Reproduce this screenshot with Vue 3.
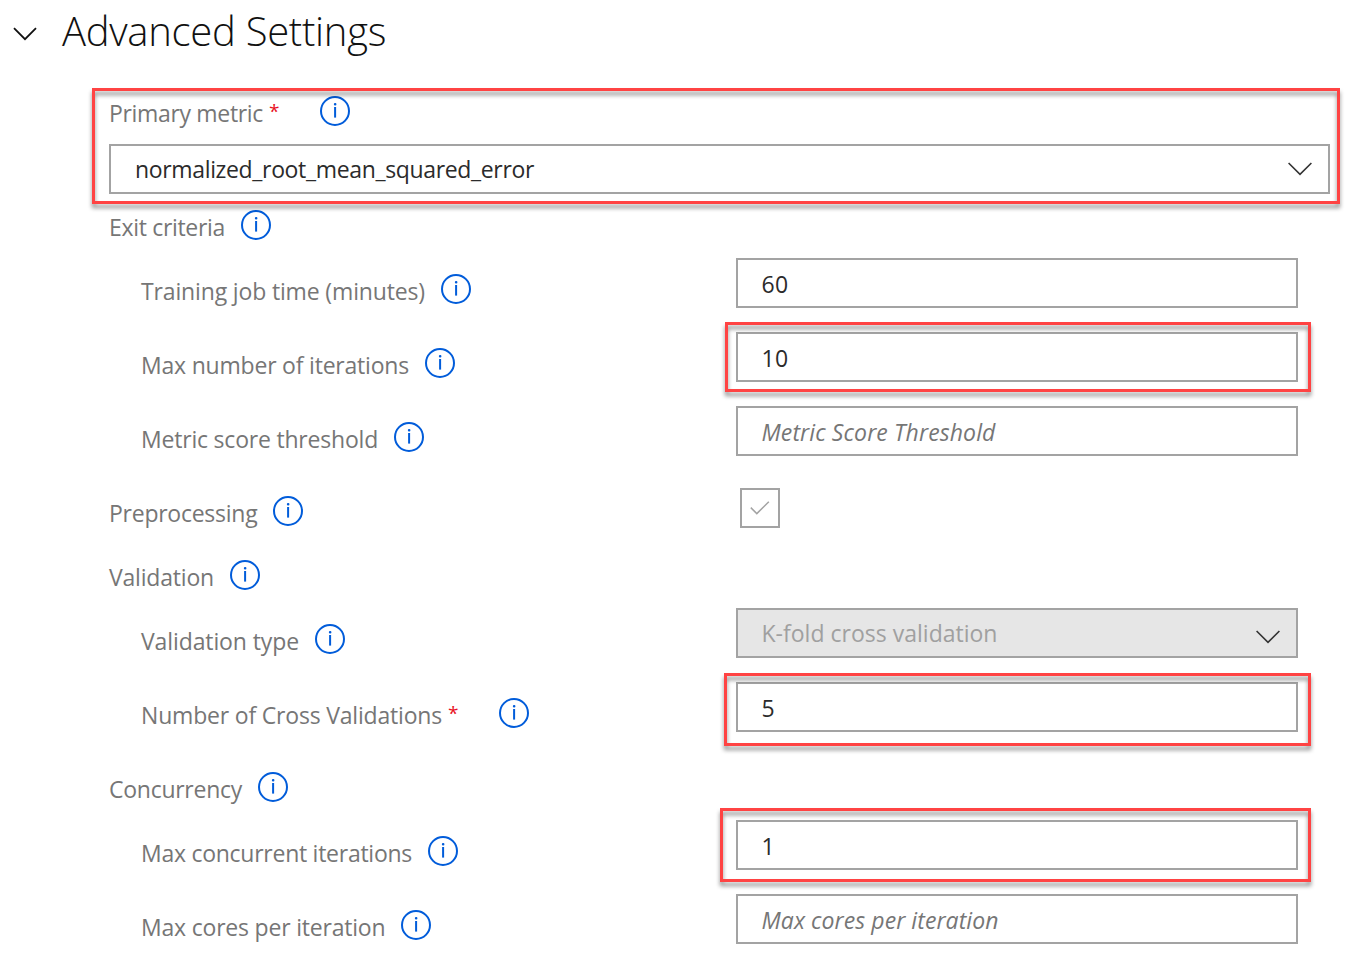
<script setup>
const rows = [
  { id: 'exit', label: 'Exit criteria', width: 116, section: true },
  { id: 'time', label: 'Training job time (minutes)', width: 284, kind: 'text', value: '60', valueWidth: 27 },
  { id: 'iterations', label: 'Max number of iterations', width: 268, kind: 'text', value: '10', valueWidth: 27, mark: 'mark-iterations' },
  { id: 'threshold', label: 'Metric score threshold', width: 237, kind: 'text', placeholder: 'Metric Score Threshold', valueWidth: 234 },
  { id: 'preprocessing', label: 'Preprocessing', width: 148.4, section: true, kind: 'check' },
  { id: 'validation', label: 'Validation', width: 105, section: true },
  { id: 'type', label: 'Validation type', width: 158, kind: 'select', value: 'K-fold cross validation', valueWidth: 236 },
  { id: 'folds', label: 'Number of Cross Validations', width: 301, required: true, kind: 'text', value: '5', valueWidth: 13, mark: 'mark-folds' },
  { id: 'concurrency', label: 'Concurrency', width: 133, section: true },
  { id: 'concurrent', label: 'Max concurrent iterations', width: 271, kind: 'text', value: '1', valueWidth: 13, mark: 'mark-concurrent' },
  { id: 'cores', label: 'Max cores per iteration', width: 244.4, kind: 'text', placeholder: 'Max cores per iteration', valueWidth: 237 },
]

// Tracks text so that it fills the given width in pixels.
const vFit = {
  mounted(el, { value }) {
    const natural = el.getBoundingClientRect().width
    el.style.letterSpacing = `${(value - natural) / el.textContent.length}px`
  },
}
</script>

<template>
  <main class="settings">
    <header class="heading">
      <svg class="toggle" width="24" height="14" viewBox="0 0 24 14">
        <path d="M1 1.2 L12 12.2 L23 1.2" />
      </svg>
      <h1><span v-fit="324" class="fit">Advanced Settings</span></h1>
    </header>

    <section class="primary">
      <div class="row section">
        <div class="label">
          <span v-fit="154" class="fit">Primary metric</span>
          <span class="star">*</span>
          <svg class="info" width="30" height="30" viewBox="0 0 30 30">
            <circle cx="15" cy="15" r="14" />
            <rect x="14.1" y="11" width="2" height="10.6" />
            <rect x="13.9" y="7" width="2.5" height="2.5" rx="1.1" />
          </svg>
        </div>
      </div>
      <div class="box wide">
        <span v-fit="399" class="fit">normalized_root_mean_squared_error</span>
        <svg class="chevron" width="24" height="14" viewBox="0 0 24 14">
          <path d="M0.6 1 L12 12.4 L23.4 1" />
        </svg>
      </div>
      <i class="mark mark-primary"></i>
    </section>

    <div v-for="row in rows" :key="row.id" class="row" :class="{ section: row.section, field: !row.section }">
      <div class="label">
        <span v-fit="row.width" class="fit">{{ row.label }}</span>
        <span v-if="row.required" class="star">*</span>
        <svg class="info" width="30" height="30" viewBox="0 0 30 30">
          <circle cx="15" cy="15" r="14" />
          <rect x="14.1" y="11" width="2" height="10.6" />
          <rect x="13.9" y="7" width="2.5" height="2.5" rx="1.1" />
        </svg>
      </div>
      <div v-if="row.kind" class="control">
        <div v-if="row.kind === 'check'" class="check">
          <svg width="20" height="14" viewBox="0 0 20 14">
            <path d="M0.8 6.6 L6.8 12.6 L18.8 0.8" />
          </svg>
        </div>
        <div v-else class="box" :class="{ disabled: row.kind === 'select', hint: row.placeholder }">
          <span v-fit="row.valueWidth" class="fit">{{ row.value || row.placeholder }}</span>
          <svg v-if="row.kind === 'select'" class="chevron" width="24" height="14" viewBox="0 0 24 14">
            <path d="M0.6 1 L12 12.4 L23.4 1" />
          </svg>
        </div>
        <i v-if="row.mark" class="mark" :class="row.mark"></i>
      </div>
    </div>
  </main>
</template>

<style>
body {
  background: #fff;
  overflow: hidden;
}
</style>

<style scoped>
.settings {
  box-sizing: border-box;
  width: 1354px;
  height: 965px;
  overflow: hidden;
  font-family: "Open Sans", "Noto Sans", sans-serif;
  font-size: 23px;
  line-height: 32px;
  color: #767676;
}
.fit {
  display: inline-block;
  white-space: nowrap;
}
svg {
  display: block;
  flex: none;
  fill: none;
}
.heading {
  display: flex;
  height: 80px;
  padding-left: 13px;
}
.toggle {
  margin-top: 27px;
  stroke: #111;
  stroke-width: 1.8;
}
h1 {
  margin: 0 0 0 25px;
  font-size: 40px;
  font-weight: 300;
  line-height: 62px;
  color: #111;
}
.primary {
  position: relative;
}
.row {
  display: flex;
  height: 74px;
  padding-left: 141px;
}
.section {
  height: 64px;
  padding-left: 109px;
}
.label {
  display: flex;
  width: 595px;
  padding-top: 16px;
}
.section .label {
  width: 627px;
}
.label .fit {
  padding-top: 1px;
}
.star {
  width: 10px;
  margin: -1px 24.5px 0 6px;
  color: #e81123;
  font-size: 19px;
}
.info {
  margin-left: 16px;
}
.info circle {
  stroke: #015cda;
  stroke-width: 2;
}
.info rect {
  fill: #015cda;
}
.control {
  position: relative;
  width: 562px;
}
.box {
  box-sizing: border-box;
  display: flex;
  justify-content: space-between;
  height: 50px;
  padding: 8px 16px 0 23.5px;
  border: 2px solid #a3a3a3;
  background: #fff;
  color: #2b2b2b;
}
.wide {
  margin: 0 24px 0 109px;
  padding-left: 24px;
}
.hint {
  color: #767676;
  font-style: italic;
}
.disabled {
  padding-top: 7px;
  background: #e6e6e6;
  color: #a0a0a0;
}
.chevron {
  margin-top: 13px;
  stroke: #333;
  stroke-width: 1.6;
}
.wide .chevron {
  margin-top: 8px;
}
.wide .fit {
  margin-top: -1px;
}
.check {
  box-sizing: border-box;
  display: flex;
  align-items: center;
  justify-content: center;
  width: 40px;
  height: 40px;
  margin: 8px 0 0 4px;
  border: 2px solid #a3a3a3;
}
.check path {
  stroke: #a3a3a3;
  stroke-width: 1.5;
}
.mark {
  position: absolute;
  border: 3px solid #ff4343;
  filter: drop-shadow(0 4px 2px rgba(0, 0, 0, 0.45));
  pointer-events: none;
}
.mark-primary {
  inset: 8px 14px -10px 92px;
}
.mark-iterations {
  inset: -10px -13px 14px -11px;
}
.mark-folds {
  inset: -9px -13px 10px -12px;
}
.mark-concurrent {
  inset: -12px -13px 12px -16px;
}
</style>
